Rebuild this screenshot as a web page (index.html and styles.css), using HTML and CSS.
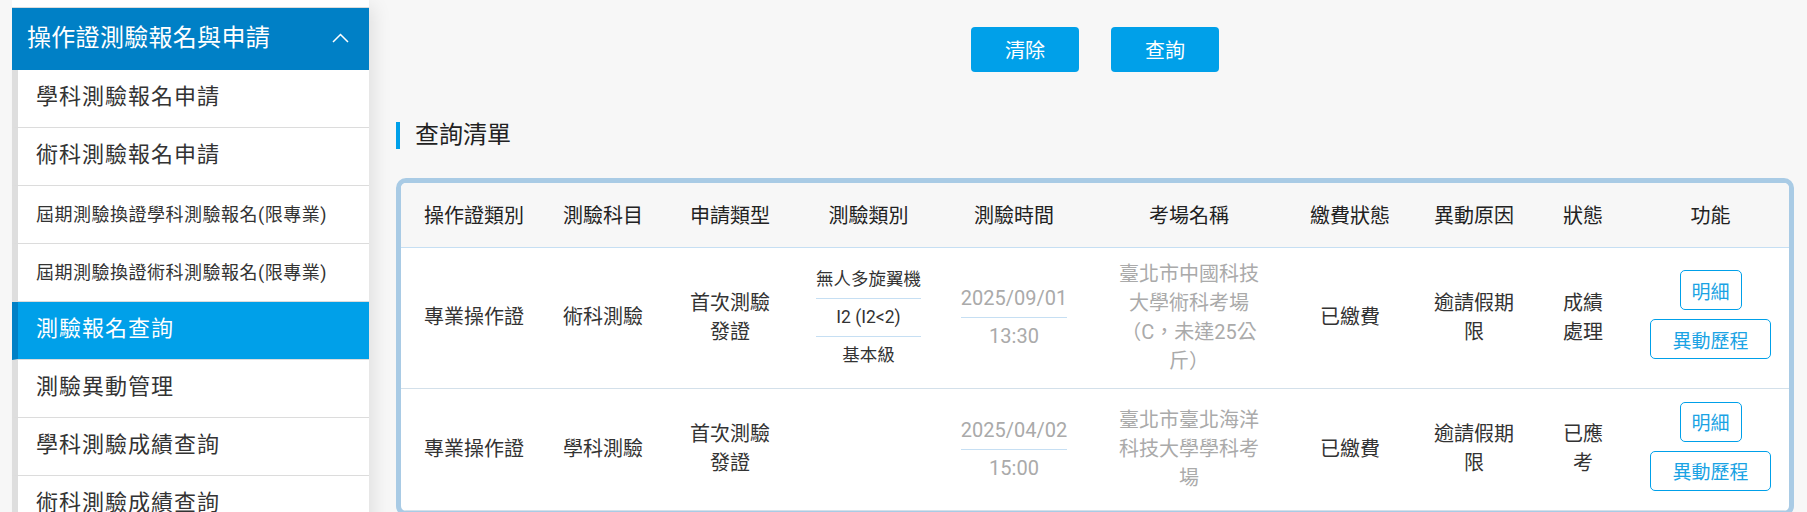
FILE: index.html
```html
<!DOCTYPE html>
<html lang="zh-Hant">
<head>
  <meta charset="UTF-8"/>
  <meta name="viewport" content="width=device-width, initial-scale=1.0"/>
  <title>測驗報名查詢</title>
  <link rel="stylesheet" href="styles.css">
</head>
<body>
  <aside class="sidebar">
    <div class="nav-prev"></div>
    <div class="nav-group-title">
      <span>操作證測驗報名與申請</span>
      <svg class="chevron" width="17" height="10" viewBox="0 0 17 10">
        <polyline points="1,9 8.5,1.5 16,9" fill="none" stroke="#fff" stroke-width="1.5"/>
      </svg>
    </div>
    <ul class="nav-list">
      <li class="nav-item">學科測驗報名申請</li>
      <li class="nav-item">術科測驗報名申請</li>
      <li class="nav-item small">屆期測驗換證學科測驗報名(限專業)</li>
      <li class="nav-item small">屆期測驗換證術科測驗報名(限專業)</li>
      <li class="nav-item active">測驗報名查詢</li>
      <li class="nav-item">測驗異動管理</li>
      <li class="nav-item">學科測驗成績查詢</li>
      <li class="nav-item">術科測驗成績查詢</li>
    </ul>
  </aside>

  <main class="main">
    <div class="form-actions">
      <button type="button" class="btn">清除</button>
      <button type="button" class="btn">查詢</button>
    </div>

    <h3 class="section-title">查詢清單</h3>

    <div class="result-box">
      <table class="result-table">
        <colgroup>
          <col style="width:146px">
          <col style="width:112px">
          <col style="width:142px">
          <col style="width:135px">
          <col style="width:156px">
          <col style="width:194px">
          <col style="width:128px">
          <col style="width:120px">
          <col style="width:98px">
          <col style="width:157px">
        </colgroup>
        <thead>
          <tr>
            <th>操作證類別</th>
            <th>測驗科目</th>
            <th>申請類型</th>
            <th>測驗類別</th>
            <th>測驗時間</th>
            <th>考場名稱</th>
            <th>繳費狀態</th>
            <th>異動原因</th>
            <th>狀態</th>
            <th>功能</th>
          </tr>
        </thead>
        <tbody>
          <tr>
            <td>專業操作證</td>
            <td>術科測驗</td>
            <td class="c-type">首次測驗發證</td>
            <td>
              <div class="sub-list">
                <div class="sub-item">無人多旋翼機</div>
                <div class="sub-item">I2 (I2&lt;2)</div>
                <div class="sub-item">基本級</div>
              </div>
            </td>
            <td>
              <div class="date-list">
                <div class="date-item">2025/09/01</div>
                <div class="date-item">13:30</div>
              </div>
            </td>
            <td class="c-site muted">臺北市中國科技大學術科考場（C，未達25公斤）</td>
            <td>已繳費</td>
            <td class="c-reason">逾請假期限</td>
            <td class="c-state">成績處理</td>
            <td>
              <div class="action-list">
                <button type="button" class="btn-outline btn-detail">明細</button>
                <button type="button" class="btn-outline btn-history">異動歷程</button>
              </div>
            </td>
          </tr>
          <tr>
            <td>專業操作證</td>
            <td>學科測驗</td>
            <td class="c-type">首次測驗發證</td>
            <td></td>
            <td>
              <div class="date-list">
                <div class="date-item">2025/04/02</div>
                <div class="date-item">15:00</div>
              </div>
            </td>
            <td class="c-site muted">臺北市臺北海洋科技大學學科考場</td>
            <td>已繳費</td>
            <td class="c-reason">逾請假期限</td>
            <td class="c-state">已應考</td>
            <td>
              <div class="action-list">
                <button type="button" class="btn-outline btn-detail">明細</button>
                <button type="button" class="btn-outline btn-history">異動歷程</button>
              </div>
            </td>
          </tr>
        </tbody>
      </table>
    </div>
  </main>
</body>
</html>
```

FILE: styles.css
```css
* {
  box-sizing: border-box;
}

body {
  margin: 0;
  min-height: 100vh;
  display: flex;
  background: #f7f7f7;
  color: #333;
  font-family: Roboto, "Noto Sans CJK TC", sans-serif;
  overflow: hidden;
}

/* Left menu */
.sidebar {
  width: 357px;
  margin-left: 12px;
  flex-shrink: 0;
  background: #fff;
  box-shadow: 10px 0 18px -6px rgba(0, 0, 0, 0.1);
}

.nav-prev {
  height: 8px;
  border-bottom: 1px solid #dcdcdc;
}

.nav-group-title {
  height: 62px;
  display: flex;
  align-items: center;
  justify-content: space-between;
  padding: 0 20px 7px 15px;
  background: #0080c6;
  color: #fff;
  font-size: 24px;
  letter-spacing: 0.3px;
}

.chevron {
  display: block;
  margin-top: 4px;
}

.nav-list {
  list-style: none;
  margin: 0;
  padding: 0;
}

.nav-item {
  height: 58px;
  display: flex;
  align-items: center;
  padding: 0 0 10px 18px;
  border-left: 6px solid #dedede;
  border-bottom: 1px solid #dcdcdc;
  font-size: 22px;
  letter-spacing: 1px;
  color: #333;
}

.nav-item.small {
  padding-bottom: 4px;
  font-size: 18px;
  letter-spacing: 0.5px;
}

.nav-item.active {
  background: #00a0e9;
  border-left-color: #0080c6;
  color: #fff;
}

/* Main content */
.main {
  flex: 1;
  padding: 27px 13px 0 27px;
}

.form-actions {
  display: flex;
  justify-content: center;
  gap: 32px;
}

.btn {
  width: 108px;
  height: 45px;
  border: none;
  border-radius: 4px;
  background: #00a0e9;
  color: #fff;
  font-family: inherit;
  font-size: 20px;
  cursor: pointer;
}

.section-title {
  margin: 50px 0 29px;
  padding-left: 15px;
  border-left: 4px solid #00a0e9;
  line-height: 27px;
  font-size: 24px;
  font-weight: normal;
  color: #222;
}

.result-box {
  border: 5px solid #a9cbe5;
  border-radius: 10px;
  overflow: hidden;
  background: #fff;
}

.result-table {
  width: 100%;
  table-layout: fixed;
  border-collapse: collapse;
  text-align: center;
}

.result-table th {
  height: 64px;
  padding: 0 8px;
  background: #f7f7f7;
  border-bottom: 1px solid #c6dff3;
  font-size: 20px;
  font-weight: normal;
  color: #222;
}

.result-table td {
  padding: 12px 8px;
  border-bottom: 1px solid #d3e0ea;
  font-size: 20px;
  line-height: 29px;
  vertical-align: middle;
  color: #333;
}

.result-table td.c-type {
  padding-left: 22px;
  padding-right: 22px;
}

.result-table td.c-site {
  padding-left: 24px;
  padding-right: 24px;
}

.result-table td.c-reason {
  padding-left: 12px;
  padding-right: 12px;
}

.result-table td.c-state {
  padding-left: 20px;
  padding-right: 20px;
}

.result-table td.muted {
  color: #aaa;
}

.sub-list,
.date-list {
  width: max-content;
  margin: 0 auto;
}

.sub-item {
  line-height: 37px;
  font-size: 17.5px;
  border-bottom: 1px solid #c6dff3;
}

.sub-item:last-child {
  border-bottom: none;
}

.date-item {
  line-height: 37px;
  color: #aaa;
  border-bottom: 1px solid #c6dff3;
}

.date-item:last-child {
  border-bottom: none;
}

.action-list {
  display: flex;
  flex-direction: column;
  align-items: center;
  gap: 9px;
  padding: 1px 0 7px;
}

.btn-outline {
  height: 40px;
  padding: 0;
  border: 1px solid #00a0e9;
  border-radius: 5px;
  background: #fff;
  color: #1aa3e4;
  font-family: inherit;
  font-size: 19px;
  cursor: pointer;
}

.btn-detail {
  width: 62px;
}

.btn-history {
  width: 121px;
}
```
